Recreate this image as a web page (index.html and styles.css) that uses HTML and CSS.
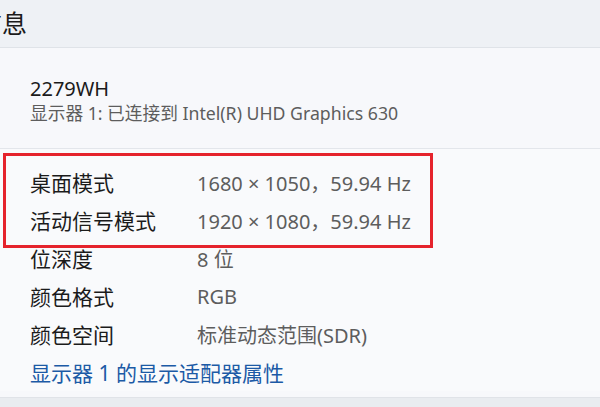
FILE: index.html
```html
<!DOCTYPE html>
<html lang="zh-CN">
<head>
    <meta charset="UTF-8">
    <meta name="viewport" content="width=device-width, initial-scale=1.0">
    <title>显示器信息</title>
    <link rel="stylesheet" href="styles.css">
</head>
<body>
    <header class="page-header">
        <h1>信息</h1>
    </header>

    <div class="card">
        <div class="monitor">
            <p class="monitor-name">2279WH</p>
            <p class="monitor-sub">显示器 1: 已连接到 Intel(R) UHD Graphics 630</p>
        </div>

        <div class="details">
            <div class="row">
                <span class="label">桌面模式</span>
                <span class="value">1680 × 1050，59.94 Hz</span>
            </div>
            <div class="row">
                <span class="label">活动信号模式</span>
                <span class="value">1920 × 1080，59.94 Hz</span>
            </div>
            <div class="row">
                <span class="label">位深度</span>
                <span class="value">8 位</span>
            </div>
            <div class="row">
                <span class="label">颜色格式</span>
                <span class="value">RGB</span>
            </div>
            <div class="row">
                <span class="label">颜色空间</span>
                <span class="value">标准动态范围(SDR)</span>
            </div>
            <div class="row">
                <a class="link" href="#">显示器 1 的显示适配器属性</a>
            </div>

            <!-- annotation drawn over the two mode rows -->
            <div class="highlight"></div>
        </div>
    </div>
</body>
</html>
```

FILE: styles.css
```css
body {
    font-family: "Noto Sans", "Noto Sans CJK SC", sans-serif;
    background: #e9ecf0;
    margin: 0;
    padding: 0;
    overflow: hidden;
}

p {
    margin: 0;
}

.page-header {
    height: 47px;
    background: #eef1f5;
    border-bottom: 1px solid #dfe3e8;
    display: flex;
    align-items: center;
}

.page-header h1 {
    margin: 0 0 0 -23px;
    font-size: 25px;
    font-weight: normal;
    color: #1b1b1b;
    line-height: 1;
}

.card {
    background: #f7f8fb;
    border-bottom: 1px solid #e0e3e8;
    height: 350px;
    box-sizing: border-box;
}

.monitor {
    padding: 28px 30px 22px;
    border-bottom: 1px solid #e3e6eb;
}

.monitor-name {
    font-size: 20px;
    line-height: 25px;
    color: #1b1b1b;
}

.monitor-sub {
    font-size: 17.7px;
    line-height: 25px;
    color: #5d5d5d;
}

.details {
    position: relative;
    padding: 14px 30px 0;
    background: #f9fafc;
}

.row {
    display: grid;
    grid-template-columns: 167px 1fr;
    height: 38px;
    align-items: center;
    font-size: 20px;
}

.label {
    font-size: 21px;
    color: #1b1b1b;
}

.value {
    color: #5d5d5d;
}

.link {
    grid-column: 1 / 3;
    font-size: 21px;
    color: #1c5aa6;
    text-decoration: none;
}

.highlight {
    position: absolute;
    left: 3px;
    top: 4px;
    width: 424px;
    height: 89px;
    border: 3px solid #e5232c;
}
```
